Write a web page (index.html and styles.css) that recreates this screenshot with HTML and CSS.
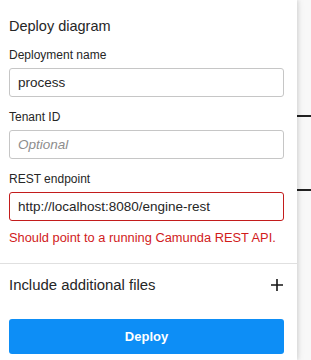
FILE: index.html
```html
<!DOCTYPE html>
<html lang="en">
<head>
<meta charset="utf-8">
<title>Deploy diagram</title>
<link rel="stylesheet" href="styles.css">
</head>
<body>
<div class="canvas">
  <div class="edge edge-a"></div>
  <div class="edge edge-b"></div>
</div>
<div class="panel">
  <form class="form">
    <h2 class="title">Deploy diagram</h2>
    <div class="field">
      <label class="label">Deployment name</label>
      <div class="input">process</div>
    </div>
    <div class="field">
      <label class="label">Tenant ID</label>
      <div class="input placeholder">Optional</div>
    </div>
    <div class="field">
      <label class="label">REST endpoint</label>
      <div class="input invalid">http://localhost:8080/engine-rest</div>
      <div class="error">Should point to a running Camunda REST API.</div>
    </div>
  </form>
  <div class="section">
    <div class="section-head">
      <span class="section-title">Include additional files</span>
      <svg class="plus" width="12" height="12" viewBox="0 0 12 12"><path d="M6 0v12M0 6h12" stroke="#161616" stroke-width="1.6"/></svg>
    </div>
    <button class="deploy" type="button">Deploy</button>
  </div>
</div>
</body>
</html>
```
FILE: styles.css
```css
html, body {
  margin: 0;
  padding: 0;
}
body {
  width: 311px;
  height: 360px;
  overflow: hidden;
  background: #f8f8f8;
  font-family: "Liberation Sans", Arial, sans-serif;
  color: #161616;
  position: relative;
}
.canvas {
  position: absolute;
  inset: 0;
}
.edge {
  position: absolute;
  left: 296px;
  width: 15px;
  height: 2px;
  background: #222;
}
.edge-a { top: 115px; }
.edge-b { top: 189px; }
.panel {
  position: relative;
  width: 297px;
  height: 360px;
  background: #fff;
  box-shadow: 0 0 8px rgba(0,0,0,0.12), 2px 0 3px rgba(0,0,0,0.06);
  box-sizing: border-box;
}
.form {
  padding: 16px 13px 0 9px;
  display: flex;
  flex-direction: column;
}
.title {
  margin: 0 0 11px;
  font-size: 14.5px;
  line-height: 20px;
  font-weight: 400;
  color: #262626;
}
.field {
  display: flex;
  flex-direction: column;
  margin-bottom: 12px;
}
.label {
  font-size: 12px;
  line-height: 16px;
  color: #262626;
  margin-bottom: 5px;
}
.input {
  height: 29px;
  box-sizing: border-box;
  border: 1px solid #c6c6c6;
  border-radius: 3px;
  padding: 0 8px;
  font-size: 13.5px;
  line-height: 27px;
  color: #262626;
}
.placeholder {
  color: #8d8d8d;
  font-style: italic;
}
.invalid {
  border-color: #c31c1c;
}
.error {
  margin-top: 9px;
  font-size: 12.85px;
  line-height: 16px;
  color: #d11b1b;
}
.section {
  border-top: 1px solid #e0e0e0;
  margin-top: 5px;
  padding: 12px 13px 0 9px;
}
.section-head {
  display: flex;
  align-items: center;
  justify-content: space-between;
  height: 18px;
  padding-right: 1px;
}
.section-title {
  font-size: 14.9px;
  line-height: 18px;
  color: #262626;
}
.deploy {
  display: block;
  width: 100%;
  height: 35px;
  margin-top: 25px;
  border: none;
  border-radius: 3px;
  background: #0d8ef6;
  color: #fff;
  font-family: inherit;
  font-size: 13px;
  font-weight: 700;
}
```
